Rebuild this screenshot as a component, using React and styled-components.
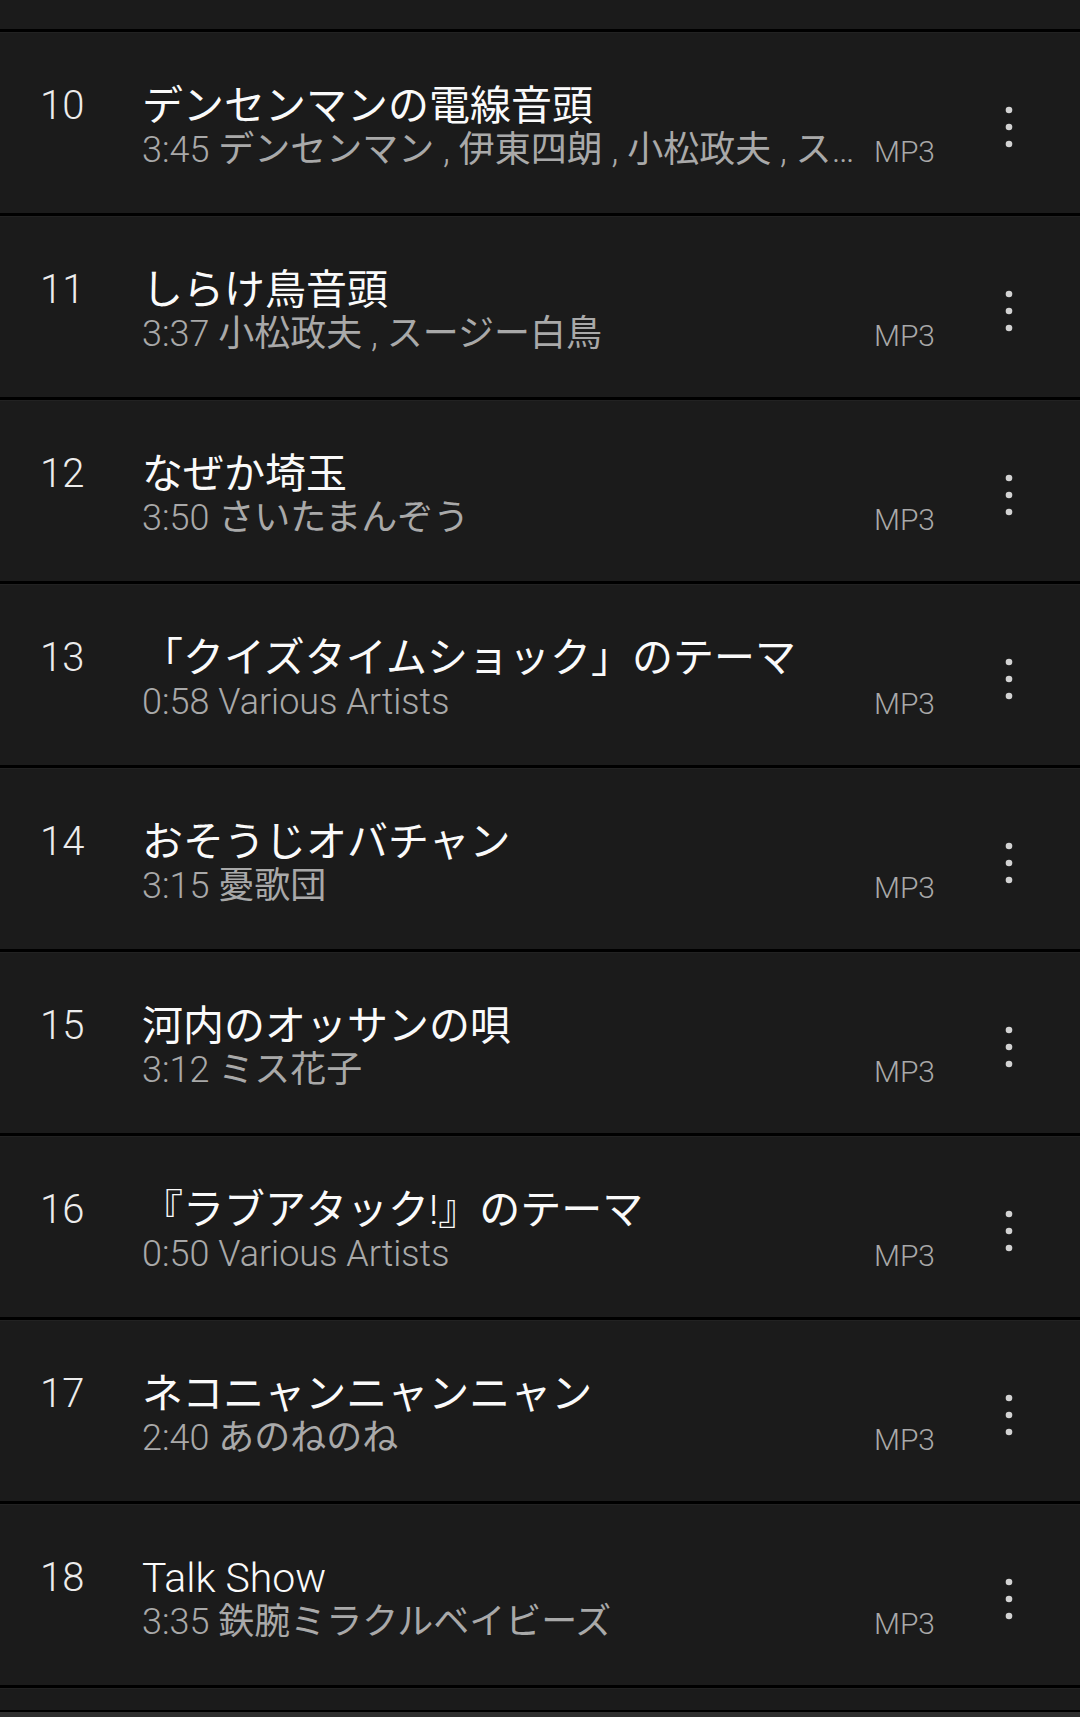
import React from 'react';
import styled, { createGlobalStyle } from 'styled-components';

const GlobalStyle = createGlobalStyle`
  html, body {
    margin: 0;
    padding: 0;
    background: #000;
  }
  body {
    font-family: "Roboto Light", Roboto, "Noto Sans CJK JP", sans-serif;
    font-weight: 400;
    -webkit-font-smoothing: antialiased;
  }
`;

const Page = styled.div`
  width: 1080px;
  height: 1717px;
  overflow: hidden;
  display: flex;
  flex-direction: column;
  background: #000;
`;

const Stub = styled.div`
  flex: none;
  height: ${p => p.$h}px;
  background: #1b1b1b;
  border-top: ${p => (p.$border ? '3px solid #000' : 'none')};
  box-shadow: ${p => (p.$border ? 'inset 0 1px 0 #222' : 'none')};
`;

const BottomBar = styled.div`
  flex: none;
  height: 5px;
  margin-top: 2px;
  background: #2f2f2f;
`;

const Row = styled.div`
  flex: none;
  height: 181px;
  box-sizing: content-box;
  border-top: 3px solid #000;
  box-shadow: inset 0 1px 0 #222;
  background: #1b1b1b;
  display: flex;
  align-items: center;
`;

const Inner = styled.div`
  display: flex;
  align-items: center;
  width: 100%;
  padding-top: 8px;
`;

const TrackNo = styled.div`
  flex: none;
  width: 102px;
  padding-left: 40px;
  align-self: flex-start;
  font-size: 40px;
  line-height: 46px;
  color: #ececec;
`;

const Info = styled.div`
  flex: 1;
  min-width: 0;
  display: flex;
  flex-direction: column;
`;

const Title = styled.div`
  font-size: 41px;
  line-height: 46px;
  color: #fafafa;
  white-space: nowrap;
  overflow: hidden;
  text-overflow: ellipsis;
`;

const SubLine = styled.div`
  display: flex;
  align-items: baseline;
`;

const Sub = styled.div`
  flex: 1;
  min-width: 0;
  font-size: 36px;
  line-height: 42px;
  color: #a9a9a9;
  white-space: nowrap;
  overflow: hidden;
  text-overflow: ellipsis;
`;

const Format = styled.span`
  flex: none;
  margin-left: 18px;
  font-size: 30px;
  color: #a9a9a9;
`;

const MenuButton = styled.div`
  flex: none;
  width: 145px;
  padding-left: 3px;
  box-sizing: border-box;
  display: flex;
  justify-content: center;
  align-items: center;
`;

const Dots = () => (
  <svg width="8" height="42" viewBox="0 0 8 42">
    <circle cx="4" cy="4" r="3.3" fill="#d2d2d2" />
    <circle cx="4" cy="21" r="3.3" fill="#d2d2d2" />
    <circle cx="4" cy="38" r="3.3" fill="#d2d2d2" />
  </svg>
);

const tracks = [
  { no: 10, title: 'デンセンマンの電線音頭', time: '3:45', artist: 'デンセンマン , 伊東四朗 , 小松政夫 , スージー白鳥' },
  { no: 11, title: 'しらけ鳥音頭', time: '3:37', artist: '小松政夫 , スージー白鳥' },
  { no: 12, title: 'なぜか埼玉', time: '3:50', artist: 'さいたまんぞう' },
  { no: 13, title: '「クイズタイムショック」のテーマ', time: '0:58', artist: 'Various Artists' },
  { no: 14, title: 'おそうじオバチャン', time: '3:15', artist: '憂歌団' },
  { no: 15, title: '河内のオッサンの唄', time: '3:12', artist: 'ミス花子' },
  { no: 16, title: '『ラブアタック!』のテーマ', time: '0:50', artist: 'Various Artists' },
  { no: 17, title: 'ネコニャンニャンニャン', time: '2:40', artist: 'あのねのね' },
  { no: 18, title: 'Talk Show', time: '3:35', artist: '鉄腕ミラクルベイビーズ' },
];

function TrackRow({ track }) {
  return (
    <Row>
      <Inner>
        <TrackNo>{track.no}</TrackNo>
        <Info>
          <Title>{track.title}</Title>
          <SubLine>
            <Sub>{track.time} {track.artist}</Sub>
            <Format>MP3</Format>
          </SubLine>
        </Info>
        <MenuButton>
          <Dots />
        </MenuButton>
      </Inner>
    </Row>
  );
}

export default function App() {
  return (
    <Page>
      <GlobalStyle />
      <Stub $h={29} />
      {tracks.map(t => (
        <TrackRow key={t.no} track={t} />
      ))}
      <Stub $h={22} $border />
      <BottomBar />
    </Page>
  );
}
